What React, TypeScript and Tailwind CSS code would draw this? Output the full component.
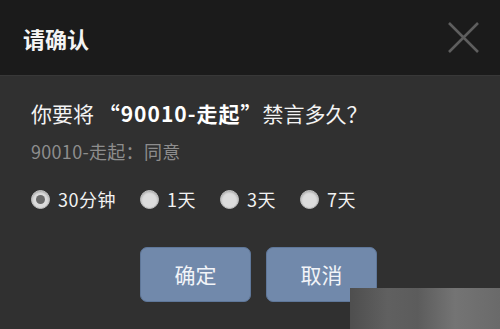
import React from "react";

const font = { fontFamily: '"Noto Sans CJK SC", "Noto Sans", sans-serif' };

function Radio({ checked, label }: { checked?: boolean; label: string }) {
  return (
    <div className="flex items-center mr-[24px]">
      <span className="w-[19px] h-[19px] rounded-full bg-[#dcdcdc] border border-[#bdbdbd] flex items-center justify-center shadow-[inset_0_1px_2px_rgba(0,0,0,0.25)]">
        {checked && <span className="w-[9px] h-[9px] rounded-full bg-[#6a6a6a]" />}
      </span>
      <span className="ml-[8px] text-[18px] leading-[24px] text-[#f2f2f2] tracking-[0.5px]">{label}</span>
    </div>
  );
}

export default function App() {
  return (
    <div className="relative w-[500px] h-[329px] overflow-hidden bg-[#303030] flex flex-col" style={font}>
      <div className="h-[76px] shrink-0 bg-[#1b1b1b] border-b border-[#383838] flex items-center justify-between pl-[23px] pr-[21px]">
        <span className="text-[22px] font-bold text-[#f4f4f4] leading-[30px]">请确认</span>
        <svg width="31" height="31" viewBox="0 0 31 31">
          <path d="M1 1L30 30M30 1L1 30" stroke="#5e5e5e" strokeWidth="2.6" />
        </svg>
      </div>
      <div className="flex flex-col pl-[31px] pt-[23px]">
        <div className="text-[21px] leading-[28px] text-[#f4f4f4] whitespace-nowrap">
          你要将 <span className="font-bold text-white tracking-[1px]">“90010-走起”</span>禁言多久？
        </div>
        <div className="mt-[12px] text-[18px] leading-[24px] text-[#8d8d8d] whitespace-nowrap tracking-[0.3px]">90010-走起：同意</div>
        <div className="mt-[24px] flex items-center h-[24px]">
          <Radio checked label="30分钟" />
          <Radio label="1天" />
          <Radio label="3天" />
          <Radio label="7天" />
        </div>
      </div>
      <div className="mt-[36px] flex pl-[140px] gap-[15px]">
        <button className="w-[111px] h-[55px] rounded-[7px] bg-[#7189ab] border border-[#5f7799] text-[21px] text-[#f2f4f8]">确定</button>
        <button className="w-[111px] h-[55px] rounded-[7px] bg-[#7189ab] border border-[#5f7799] text-[21px] text-[#f2f4f8]">取消</button>
      </div>
      <div className="absolute left-[350px] top-[288px] w-[150px] h-[41px] bg-[linear-gradient(90deg,#4e4e4e_0%,#606060_25%,#5c5c5c_45%,#747474_70%,#6a6a6a_100%)]" />
    </div>
  );
}
